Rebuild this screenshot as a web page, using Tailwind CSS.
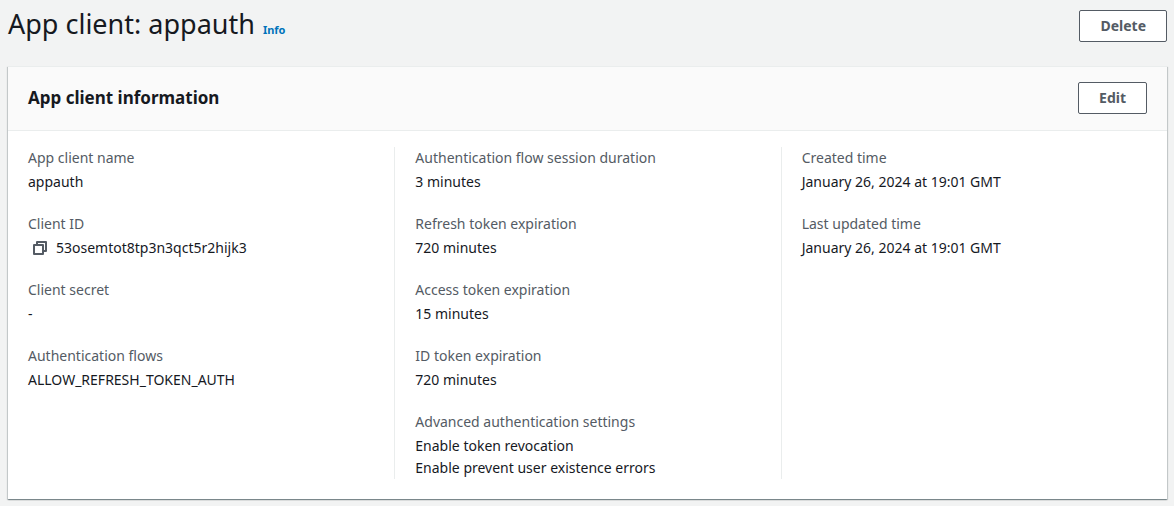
<!DOCTYPE html>
<html lang="en">
<head>
<meta charset="utf-8">
<meta name="viewport" content="width=device-width, initial-scale=1">
<title>App client: appauth</title>
<script src="https://cdn.jsdelivr.net/npm/@tailwindcss/browser@4"></script>
</head>
<body class="min-h-screen bg-[#f2f3f3] pr-[7px] pb-1.5 pl-2 text-[14px] leading-[22px] text-[#16191f] font-['Noto_Sans',sans-serif]">
<header class="flex items-start justify-between pt-2">
  <div class="flex items-baseline gap-2">
    <h1 class="text-[27px] leading-8">App client: appauth</h1>
    <a href="#" class="text-[11px] leading-4 font-bold text-[#0073bb]">Info</a>
  </div>
  <button type="button" class="mt-0.5 h-8 rounded-xs border border-[#545b64] bg-white px-5 font-bold text-[#545b64]">Delete</button>
</header>
<main class="mt-6 border-t border-[#eaeded] bg-white shadow-[0_1px_1px_0_rgba(0,28,36,0.3),1px_1px_1px_0_rgba(0,28,36,0.15),-1px_1px_1px_0_rgba(0,28,36,0.15)]">
  <div class="flex items-center justify-between border-b border-[#eaeded] bg-[#fafafa] px-5 pt-[15px] pb-4">
    <h2 class="text-[17px] leading-[22px] font-bold">App client information</h2>
    <button type="button" class="h-8 rounded-xs border border-[#545b64] bg-white px-5 font-bold text-[#545b64]">Edit</button>
  </div>
  <div class="grid grid-cols-3 pt-4 pb-5">
    <dl class="flex flex-col gap-5 px-5">
      <div><dt class="mb-0.5 text-[#545b64]">App client name</dt><dd>appauth</dd></div>
      <div>
        <dt class="mb-0.5 text-[#545b64]">Client ID</dt>
        <dd class="flex items-center gap-2 pl-1">
          <button type="button" aria-label="Copy client ID" class="text-[#545b64]">
            <svg class="block size-4" viewBox="0 0 16 16" fill="none" stroke="currentColor" stroke-width="2" stroke-linejoin="round" aria-hidden="true">
              <path d="M2 5h9v9H2z"/>
              <path d="M5 5V2h9v9h-3"/>
            </svg>
          </button>
          <span>53osemtot8tp3n3qct5r2hijk3</span>
        </dd>
      </div>
      <div><dt class="mb-0.5 text-[#545b64]">Client secret</dt><dd>-</dd></div>
      <div><dt class="mb-0.5 text-[#545b64]">Authentication flows</dt><dd>ALLOW_REFRESH_TOKEN_AUTH</dd></div>
    </dl>
    <dl class="flex flex-col gap-5 border-l border-[#eaeded] px-5">
      <div><dt class="mb-0.5 text-[#545b64]">Authentication flow session duration</dt><dd>3 minutes</dd></div>
      <div><dt class="mb-0.5 text-[#545b64]">Refresh token expiration</dt><dd>720 minutes</dd></div>
      <div><dt class="mb-0.5 text-[#545b64]">Access token expiration</dt><dd>15 minutes</dd></div>
      <div><dt class="mb-0.5 text-[#545b64]">ID token expiration</dt><dd>720 minutes</dd></div>
      <div><dt class="mb-0.5 text-[#545b64]">Advanced authentication settings</dt><dd>Enable token revocation</dd><dd>Enable prevent user existence errors</dd></div>
    </dl>
    <dl class="flex flex-col gap-5 border-l border-[#eaeded] px-5">
      <div><dt class="mb-0.5 text-[#545b64]">Created time</dt><dd>January 26, 2024 at 19:01 GMT</dd></div>
      <div><dt class="mb-0.5 text-[#545b64]">Last updated time</dt><dd>January 26, 2024 at 19:01 GMT</dd></div>
    </dl>
  </div>
</main>
</body>
</html>
